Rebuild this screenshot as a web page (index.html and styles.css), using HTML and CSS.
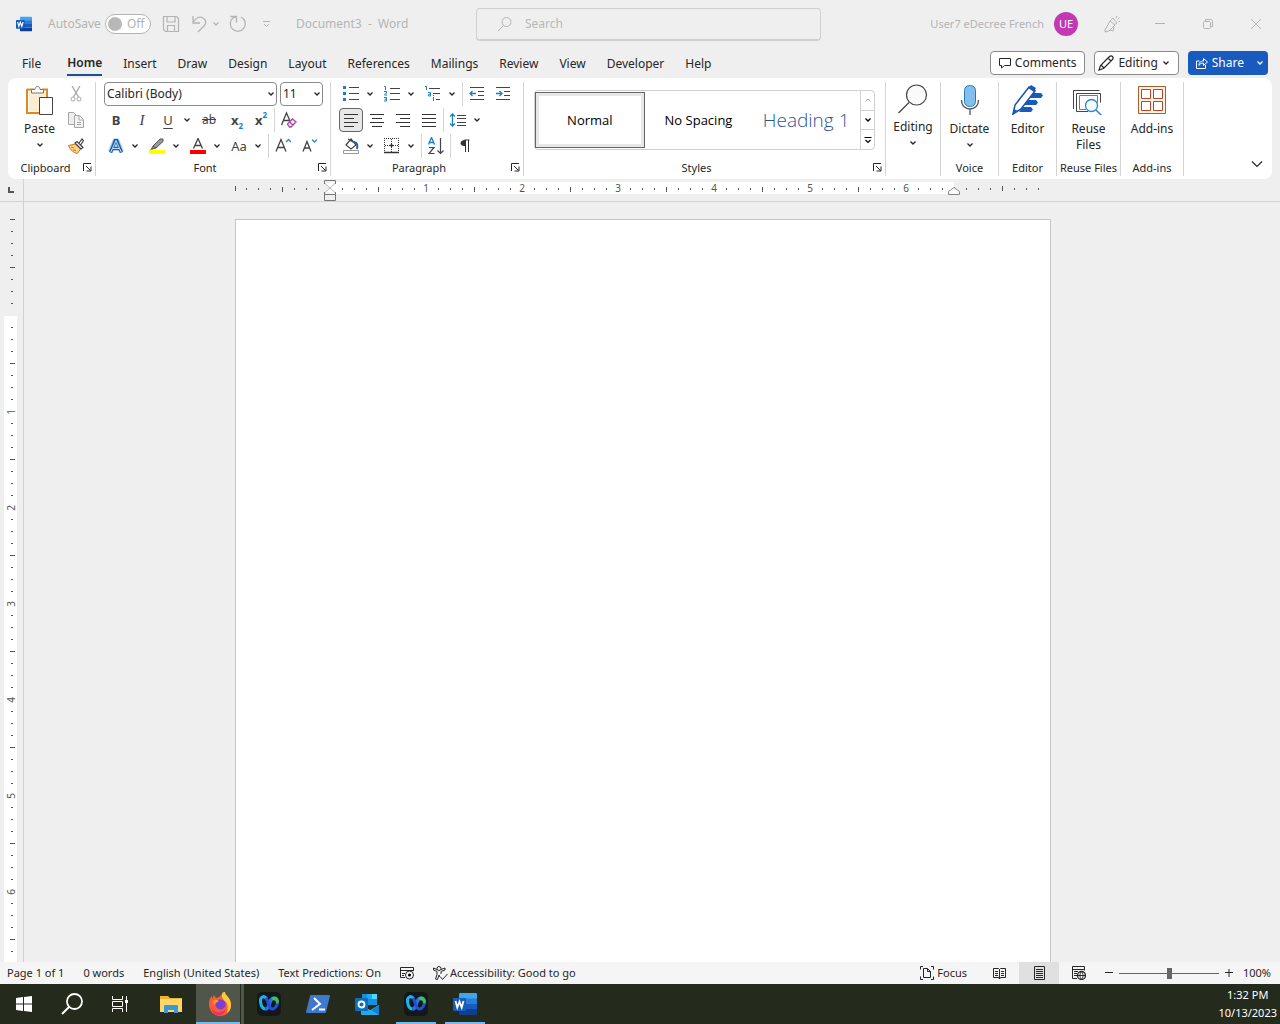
FILE: index.html
```html
<!DOCTYPE html>
<html lang="en">
<head>
  <meta charset="UTF-8">
  <title>Document3 - Word</title>
  <link rel="stylesheet" href="styles.css">
</head>
<body>
  <!-- Shared icons -->
  <svg class="defs" aria-hidden="true">
    <symbol id="chev" viewBox="0 0 8 8"><path d="M1.500 2.500 4 5l2.500-2.500" fill="none" stroke="currentColor" stroke-width="1.300"/></symbol>
    <symbol id="launch" viewBox="0 0 9 9"><path d="M.5 8V.5H8M3 3l4.500 4.500M8 3.500V8H3.500" fill="none" stroke="currentColor"/></symbol>
    <symbol id="webex" viewBox="0 0 24 24">
      <rect width="24" height="24" rx="5" fill="#15181a"/>
      <path d="M9.500 6.500C7 3 3 5 3.500 9.500 4 14 6 17 8.500 17" fill="none" stroke="#14b8ec" stroke-width="3"/>
      <path d="M8.500 17c3 0 3.500-4 4.500-7 1-3 3-4.500 5-3.500" fill="none" stroke="#2f6df0" stroke-width="3.500"/>
      <path d="M9 6c2.500 3 2.500 11 6.500 11 3 0 5-4 5-7.500" fill="none" stroke="#2450d8" stroke-width="3"/>
      <path d="M14.500 6c3-3 7-1 7.500 3l-.5 2.500-2.500-.5c0-2-1-3-3-2.500z" fill="#35c759"/>
    </symbol>
    <symbol id="word" viewBox="0 0 24 22">
      <path d="M7 0h16q1 0 1 1v5H6V1q0-1 1-1z" fill="#41a5ee"/>
      <path d="M6 5.500h18V11H6z" fill="#2b7cd3"/>
      <path d="M6 11h18v5.500H6z" fill="#185abd"/>
      <path d="M6 16.500h18V21q0 1-1 1H7q-1 0-1-1z" fill="#103f91"/>
      <rect y="5" width="13" height="13" rx="1" fill="#185abd"/>
      <path d="m2.500 8 1.800 6.500L6.500 8.500l2.200 6L10.500 8" fill="none" stroke="#fff" stroke-width="1.800"/>
    </symbol>
  </svg>

  <!-- Title bar -->
  <header class="titlebar">
    <svg class="app-icon" width="16" height="16"><use href="#word"/></svg>
    <label class="autosave">AutoSave
      <span class="switch"><input type="checkbox"><span>Off</span></span>
    </label>
    <button class="quick" aria-label="Save"><svg width="18" height="18"><path d="M1.500 1.500h13l2 2v13h-13l-2-2zM5 1.500V7h8V1.500M5.500 16v-5.500h7V16" fill="none" stroke="currentColor" stroke-width="1.200"/></svg></button>
    <button class="quick undo" aria-label="Undo"><svg width="18" height="18"><path d="M2 1v7h7M2 8c3-6 7-7 10-5 4 2.500 3 6 1 8l-6 6" fill="none" stroke="currentColor" stroke-width="1.300"/></svg></button>
    <button class="quick drop" aria-label="Undo list"><svg width="8" height="8"><use href="#chev"/></svg></button>
    <button class="quick redo" aria-label="Repeat"><svg width="18" height="18"><path d="M1.500 1.500h6v6M12 2a7.500 7.500 0 1 1-8 1l3.500-1.500" fill="none" stroke="currentColor" stroke-width="1.300"/></svg></button>
    <button class="quick more" aria-label="Customize"><svg width="9" height="8"><path d="M1 1.500h7M2 4l2.500 2.500L7 4" fill="none" stroke="currentColor"/></svg></button>
    <span class="doc-name">Document3&nbsp; -&nbsp; Word</span>
    <label class="search">
      <svg width="16" height="16"><circle cx="9.500" cy="6" r="4.500" fill="none" stroke="currentColor"/><path d="M6.500 9.500 1 15" stroke="currentColor"/></svg>
      <input type="text" placeholder="Search" aria-label="Search">
    </label>
    <div class="account">
      <span>User7 eDecree French</span>
      <span class="avatar">UE</span>
      <button aria-label="Coming soon"><svg width="18" height="18"><path d="m2 15 5-9 5 4-6 6-4 1zM7 6l3-3 4 5-3 2M13 3l1-2M14.500 4.500l2-2M15.500 6.500H17M7 15l3 1 1-4" fill="none" stroke="currentColor"/></svg></button>
      <button aria-label="Minimize"><svg width="10" height="10"><path d="M0 4.500h10" stroke="currentColor"/></svg></button>
      <button aria-label="Restore"><svg width="10" height="10"><path d="M2.500 2V.5h6l1 1V7.500H8" fill="none" stroke="currentColor"/><rect x=".5" y="2.500" width="7" height="7" rx="1" fill="none" stroke="currentColor"/></svg></button>
      <button aria-label="Close"><svg width="10" height="10"><path d="m0 0 10 10M10 0 0 10" stroke="currentColor"/></svg></button>
    </div>
  </header>

  <!-- Tabs -->
  <nav class="tabs">
    <a href="#" class="file">File</a>
    <a href="#" class="current">Home</a>
    <a href="#">Insert</a>
    <a href="#">Draw</a>
    <a href="#">Design</a>
    <a href="#">Layout</a>
    <a href="#">References</a>
    <a href="#">Mailings</a>
    <a href="#">Review</a>
    <a href="#">View</a>
    <a href="#">Developer</a>
    <a href="#">Help</a>
    <div class="actions">
      <button class="outline"><svg width="12" height="12"><path d="M.5 1.500h11v7h-6l-3 2.500V8.500h-2z" fill="none" stroke="currentColor"/></svg>Comments</button>
      <button class="outline edit-mode"><svg width="16" height="16"><path d="M1 15 2.500 10.500 11 2q2-2 3.500-.5T14 5l-8.500 8.500zM10 3l3 3M3 10l3 3" fill="none" stroke="currentColor" stroke-width="1.200"/></svg>Editing<svg width="8" height="8"><use href="#chev"/></svg></button>
      <button class="share"><svg width="12" height="12"><path d="M3.500 4H.5v7.500h9V8M3 8.500C3 5 5 4 7.500 4V1.500L11.500 5l-4 3.500V6C5.500 6 4 6.500 3 8.500z" fill="none" stroke="currentColor"/></svg>Share<svg class="arrow" width="8" height="8"><use href="#chev"/></svg></button>
    </div>
  </nav>

  <!-- Ribbon -->
  <main class="ribbon">
    <section class="group clipboard">
      <div class="body">
        <button class="big paste">
          <svg width="30" height="32">
            <path d="M2 4.500h7M17 4.500h5V13M2 4v24h12" fill="none" stroke="#e08a1e" stroke-width="2"/>
            <path d="M4 6.500h16V13h-6v13H4z" fill="#fdecd0"/>
            <path d="M6.500 8V4.500H10c0-4 5-4 5 0h3.500V8z" fill="#fff" stroke="#777"/>
            <path d="M14.500 12.500h13v17h-13z" fill="#fff" stroke="#444"/>
          </svg>
          <span>Paste</span>
          <svg class="chev" width="8" height="8"><use href="#chev"/></svg>
        </button>
        <div class="rows">
          <button class="tool dim" aria-label="Cut"><svg width="12" height="16"><path d="m2 0 6.500 11M10 0 3.500 11" stroke="currentColor" stroke-width="1.300"/><circle cx="3" cy="13" r="2" fill="none" stroke="currentColor"/><circle cx="9" cy="13" r="2" fill="none" stroke="currentColor"/></svg></button>
          <button class="tool dim" aria-label="Copy"><svg width="16" height="16"><path d="M6 12.500H.5V.5h5l3 3V5" fill="#eee" stroke="currentColor"/><path d="M6.500 3.500h5l4 4v8h-9zM11 4v4h4M9 10.500h4M9 12.500h4" fill="#f3f3f3" stroke="currentColor"/></svg></button>
          <button class="tool" aria-label="Format Painter"><svg width="16" height="16"><path d="m.5 7.500 7-1.500 5 5-3 4.500C6 15 2 12 .5 7.500z" fill="#fbd08b" stroke="#d67a10"/><path d="m3 9 3 1M5 12l3 .500" stroke="#d67a10"/><path d="m7 5 6 6 2-1.500-6-6zM11 5l3-4 1.500 1.500L13 6.500" fill="#fff" stroke="#444" stroke-width="1.200"/></svg></button>
        </div>
      </div>
      <h2>Clipboard</h2>
      <button class="launcher" aria-label="Clipboard options"><svg width="9" height="9"><use href="#launch"/></svg></button>
    </section>

    <section class="group font">
      <div class="rows">
        <div class="row fields">
          <span class="combo name"><select aria-label="Font"><option>Calibri (Body)</option></select><svg width="8" height="8"><use href="#chev"/></svg></span>
          <span class="combo size"><select aria-label="Font size"><option>11</option></select><svg width="8" height="8"><use href="#chev"/></svg></span>
        </div>
        <div class="row">
          <button class="tool b">B</button>
          <button class="tool i">I</button>
          <button class="tool u">U</button>
          <button class="drop" aria-label="Underline styles"><svg width="8" height="8"><use href="#chev"/></svg></button>
          <button class="tool wide strike">ab</button>
          <button class="tool narrow script">x<sub>2</sub></button>
          <button class="tool narrow script">x<sup>2</sup></button>
          <span class="sep"></span>
          <button class="tool" aria-label="Clear formatting"><svg width="18" height="18"><path d="M1.500 14 6.500 2 10 10M3 9.500h6" fill="none" stroke="#444" stroke-width="1.300"/><path d="m7.500 13 5-5 3.500 3-5 5h-1.500zM9.500 11l3.500 3" fill="#f6e4f8" stroke="#a349a4" stroke-width="1.300"/></svg></button>
        </div>
        <div class="row splits">
          <span><button class="tool" aria-label="Text effects"><svg width="16" height="16"><path d="M2.500 14 7 3h2l4.500 11M5 10.500h6" fill="none" stroke="#9ccbf0" stroke-width="5"/><path d="M2.500 14.500 7.300 2.500h1.400l4.800 12M5 10.500h6" fill="none" stroke="#175ea8" stroke-width="3.200"/><path d="M2.800 14 8 2.500 13.200 14M5 10.500h6" fill="none" stroke="#fff" stroke-width=".8"/></svg></button><button class="drop" aria-label="Effects list"><svg width="8" height="8"><use href="#chev"/></svg></button></span>
          <span><button class="tool" aria-label="Highlight"><svg width="16" height="16"><path d="m4 8 7-7 3 0 0 2.500L7 10zM4 8l-1.500 3L7 10M1 12h3" fill="#999" stroke="#555"/><path d="M0 12h16v4H0z" fill="#ff0"/></svg></button><button class="drop" aria-label="Highlight colors"><svg width="8" height="8"><use href="#chev"/></svg></button></span>
          <span><button class="tool" aria-label="Font color"><svg width="16" height="16"><path d="m3.500 10.500 4.500-10 4.500 10M5 7.500h6" fill="none" stroke="#444" stroke-width="1.300"/><path d="M0 12h16v4H0z" fill="red"/></svg></button><button class="drop" aria-label="Font colors"><svg width="8" height="8"><use href="#chev"/></svg></button></span>
          <span><button class="tool case">Aa</button><button class="drop" aria-label="Case list"><svg width="8" height="8"><use href="#chev"/></svg></button></span>
          <span class="sep"></span>
          <button class="tool" aria-label="Grow font"><svg width="16" height="16"><path d="M1 13.500 6 1.500l5 12M3 9.500h6" fill="none" stroke="#444" stroke-width="1.300"/><path d="m11 4 2.500-2.500L16 4" fill="none" stroke="#2b88c8" stroke-width="1.300"/></svg></button>
          <button class="tool" aria-label="Shrink font"><svg width="16" height="16"><path d="m2 13.500 4-10 4 10M3.500 10h5" fill="none" stroke="#444" stroke-width="1.300"/><path d="M11 1.500 13.500 4 16 1.500" fill="none" stroke="#2b88c8" stroke-width="1.300"/></svg></button>
        </div>
      </div>
      <h2>Font</h2>
      <button class="launcher" aria-label="Font options"><svg width="9" height="9"><use href="#launch"/></svg></button>
    </section>

    <section class="group para">
      <div class="rows">
        <div class="row splits">
          <span><button class="tool" aria-label="Bullets"><svg width="16" height="16"><path d="M0 0h3v3H0zM0 6h3v3H0zM0 12h3v3H0z" fill="#1e7fc0"/><path d="M6 1.500h10M6 7.500h10M6 13.500h10" stroke="#444"/></svg></button><button class="drop" aria-label="Bullet library"><svg width="8" height="8"><use href="#chev"/></svg></button></span>
          <span><button class="tool" aria-label="Numbering"><svg width="16" height="16"><path d="M0 .5h1.500V4M0 5.500h2.500v1.500L.5 9H3M0 11.500h2.500V15H0M.5 13.200h2" fill="none" stroke="#1e7fc0"/><path d="M6 2.500h10M6 7.500h10M6 13.500h10" stroke="#444"/></svg></button><button class="drop" aria-label="Number library"><svg width="8" height="8"><use href="#chev"/></svg></button></span>
          <span><button class="tool" aria-label="Multilevel list"><svg width="16" height="16"><path d="M0 .5h1.500V4M3 6.500h2.500V10H3.500V8.200h2M8.500 11v4M8.500 9v1" fill="none" stroke="#1e7fc0"/><path d="M4 2.500h11M8 7.500h7M11 13.500h4" stroke="#444"/></svg></button><button class="drop" aria-label="List library"><svg width="8" height="8"><use href="#chev"/></svg></button></span>
          <span class="sep"></span>
          <button class="tool" aria-label="Decrease indent"><svg width="16" height="16"><path d="M1 1.500h14M9 5.500h6M9 9.500h6M1 13.500h14" stroke="#444"/><path d="M7 7.500H1M3.500 5 1 7.500 3.500 10" fill="none" stroke="#1e7fc0" stroke-width="1.300"/></svg></button>
          <button class="tool" aria-label="Increase indent"><svg width="16" height="16"><path d="M1 1.500h14M9 5.500h6M9 9.500h6M1 13.500h14" stroke="#444"/><path d="M1 7.500h6M4.500 5 7 7.500 4.500 10" fill="none" stroke="#1e7fc0" stroke-width="1.300"/></svg></button>
        </div>
        <div class="row">
          <button class="tool pressed" aria-label="Align left"><svg width="14" height="14"><path d="M0 1.500h14M0 5.500h10M0 9.500h14M0 13.500h10" stroke="#333"/></svg></button>
          <button class="tool" aria-label="Center"><svg width="14" height="14"><path d="M0 1.500h14M2 5.500h10M0 9.500h14M2 13.500h10" stroke="#333"/></svg></button>
          <button class="tool" aria-label="Align right"><svg width="14" height="14"><path d="M0 1.500h14M4 5.500h10M0 9.500h14M4 13.500h10" stroke="#333"/></svg></button>
          <button class="tool" aria-label="Justify"><svg width="14" height="14"><path d="M0 1.500h14M0 5.500h14M0 9.500h14M0 13.500h14" stroke="#333"/></svg></button>
          <span class="sep"></span>
          <button class="tool" aria-label="Line spacing"><svg width="16" height="14"><path d="M7 2.500h9M7 5.500h9M7 9.500h9M7 12.500h9" stroke="#444"/><path d="M2.500 1v12M0 3.500 2.500 1 5 3.500M0 10.500 2.500 13 5 10.500" fill="none" stroke="#1e7fc0" stroke-width="1.300"/></svg></button>
          <button class="drop" aria-label="Spacing list"><svg width="8" height="8"><use href="#chev"/></svg></button>
        </div>
        <div class="row splits">
          <span><button class="tool" aria-label="Shading"><svg width="16" height="16"><path d="m3 7 5-6 5 6-5 4zM5 1l5 3" fill="#fff" stroke="#444" stroke-width="1.200"/><path d="M11 4c3 0 4 3 3 7" fill="none" stroke="#1e5fa0" stroke-width="2"/><path d="M.5 12.500h15v3H.5z" fill="#fff" stroke="#999"/></svg></button><button class="drop" aria-label="Shading colors"><svg width="8" height="8"><use href="#chev"/></svg></button></span>
          <span><button class="tool" aria-label="Borders"><svg width="16" height="16"><path d="M0 .5h16M.5 0v14M14.500 0v14M7.500 1v13M1 7.500h14" stroke="#333" stroke-dasharray="1 1"/><path d="M6 7.500h3M7.500 6v3M0 14.500h15" stroke="#333" stroke-width="1.300"/></svg></button><button class="drop" aria-label="Border list"><svg width="8" height="8"><use href="#chev"/></svg></button></span>
          <span class="sep"></span>
          <button class="tool" aria-label="Sort"><svg width="16" height="18"><path d="m.5 7.500 3-7 3 7M1.500 5.500h4" fill="none" stroke="#1e7fc0" stroke-width="1.300"/><path d="M1 10.500h5L1 16.500h5.500M12.500 1v15.500M9.500 13.500l3 3 3-3" fill="none" stroke="#444" stroke-width="1.200"/></svg></button>
          <span class="sep"></span>
          <button class="tool" aria-label="Show marks"><svg width="12" height="14"><path d="M5.500 1h5M6.500 1v12M9.500 1v12" stroke="#333"/><path d="M6 1v6C0 7.500 0 1 6 1z" fill="#333"/></svg></button>
        </div>
      </div>
      <h2>Paragraph</h2>
      <button class="launcher" aria-label="Paragraph options"><svg width="9" height="9"><use href="#launch"/></svg></button>
    </section>

    <section class="group styles">
      <div class="gallery">
        <button class="style selected">Normal</button>
        <button class="style">No Spacing</button>
        <button class="style heading">Heading 1</button>
        <div class="scroller">
          <button class="dim" aria-label="Up"><svg width="8" height="8"><path d="M1.500 5.500 4 3l2.500 2.500" fill="none" stroke="currentColor"/></svg></button>
          <button aria-label="Down"><svg width="8" height="8"><use href="#chev"/></svg></button>
          <button aria-label="All styles"><svg width="8" height="8"><path d="M.5 1.500h7M1.500 4 4 6.500 6.500 4" fill="none" stroke="currentColor" stroke-width="1.200"/></svg></button>
        </div>
      </div>
      <h2>Styles</h2>
      <button class="launcher" aria-label="Style options"><svg width="9" height="9"><use href="#launch"/></svg></button>
    </section>

    <section class="group editing">
      <button class="big">
        <svg width="30" height="32"><circle cx="18.500" cy="12" r="10" fill="#fafafa" stroke="#444" stroke-width="1.200"/><path d="M11 19.500.5 30" stroke="#444" stroke-width="1.300"/></svg>
        <span>Editing</span>
        <svg class="chev" width="8" height="8"><use href="#chev"/></svg>
      </button>
    </section>
    <section class="group voice">
      <button class="big low">
        <svg width="20" height="32"><rect x="4.500" y="2.500" width="11" height="21" rx="5" fill="#83beec" stroke="#1e7fc0"/><path d="M1.500 17c0 12 17 12 17 0M10 26v6" fill="none" stroke="#555" stroke-width="1.300"/></svg>
        <span>Dictate</span>
        <svg class="chev" width="8" height="8"><use href="#chev"/></svg>
      </button>
      <h2>Voice</h2>
    </section>
    <section class="group editor">
      <button class="big low">
        <svg width="32" height="32"><path d="M21 10h9l2 2.500-2 2.500H17zM16 17h9l2 2.500-2 2.500H13zM12 24h8l2 2.500-2 2.500H8z" fill="#185abd"/><path d="m2 31 2-9L18 4l6 4L10 26z" fill="#fff" stroke="#1552ae" stroke-width="1.500"/><path d="m17 5 3-3 5 3-2 4zM2 32l1-6 4 2z" fill="#185abd"/></svg>
        <span>Editor</span>
      </button>
      <h2>Editor</h2>
    </section>
    <section class="group reuse">
      <button class="big low">
        <svg width="30" height="34"><path d="M.5 26V7.500h26M3.500 28.500v-18h24v9M3.500 28.500H15" fill="none" stroke="#444"/><path d="M6.500 26.500v-14h18v7M6.500 26.500H13" fill="none" stroke="#777"/><circle cx="18.500" cy="22.500" r="6" fill="#f7fbfe" stroke="#2b88c8" stroke-width="1.300"/><path d="m23 27 6.500 6.500" stroke="#2b88c8" stroke-width="1.500"/></svg>
        <span>Reuse<br>Files</span>
      </button>
      <h2>Reuse Files</h2>
    </section>
    <section class="group addins">
      <button class="big low">
        <svg width="28" height="32"><path d="M.5 3.500h27v27H.5z" fill="#fdf3e4" stroke="#b05a28"/><path d="M3.500 6.500h9v9h-9zM15.500 6.500h9v9h-9zM3.500 18.500h9v9h-9zM15.500 18.500h9v9h-9z" fill="#fff" stroke="#b7472a"/></svg>
        <span>Add-ins</span>
      </button>
      <h2>Add-ins</h2>
    </section>
    <button class="collapse" aria-label="Collapse ribbon"><svg width="12" height="8"><path d="m1 1.500 5 5 5-5" fill="none" stroke="currentColor" stroke-width="1.200"/></svg></button>
  </main>

  <!-- Horizontal ruler: 96px per inch -->
  <div class="hruler">
    <div class="corner"><svg width="6" height="6"><path d="M1 0v5h5" fill="none" stroke="#555" stroke-width="2"/></svg></div>
    <div class="track">
      <svg width="816" height="22">
        <defs>
          <pattern id="hticks" width="96" height="12" patternUnits="userSpaceOnUse">
            <path d="M12 5h1v2h-1zM24 5h1v2h-1zM36 5h1v2h-1zM48 4h1v5h-1zM60 5h1v2h-1zM72 5h1v2h-1zM84 5h1v2h-1z" fill="#555"/>
          </pattern>
        </defs>
        <path d="M95 3h624v12H95z" fill="#fff"/>
        <g transform="translate(-1 4)"><rect x="1" width="806" height="12" fill="url(#hticks)"/></g>
        <path d="M0 7h1v5H0zM767 7h1v5h-1z" fill="#555"/>
        <g class="nums"><text x="191" y="13">1</text><text x="287" y="13">2</text><text x="383" y="13">3</text><text x="479" y="13">4</text><text x="575" y="13">5</text><text x="671" y="13">6</text></g>
        <path d="M90 4.500 95 9l5-4.500M90 13.500 95 9l5 4.500" fill="#fff" stroke="#bbb"/>
        <path d="M89.500 5V1.500h11V5M89.500 13v8.500h11V13M89.500 15.500h11" fill="none" stroke="#777"/>
        <path d="M713.500 15.500v-3l5.500-4 5.500 4v3z" fill="#fff" stroke="#888"/>
      </svg>
    </div>
  </div>

  <!-- Document area -->
  <div class="workspace">
    <div class="vruler">
      <svg width="23" height="100%">
        <defs>
          <pattern id="vticks" width="24" height="96" patternUnits="userSpaceOnUse">
            <path d="M11 12h2v1h-2zM11 24h2v1h-2zM11 36h2v1h-2zM10 48h5v1h-5zM11 60h2v1h-2zM11 72h2v1h-2zM11 84h2v1h-2z" fill="#555"/>
          </pattern>
        </defs>
        <rect x="4" y="114" width="13" height="100%" fill="#fff"/>
        <g transform="translate(0 17)"><rect width="24" height="100%" fill="url(#vticks)"/></g>
        <path d="M10 17h5v1h-5z" fill="#555"/>
        <g class="nums"><text transform="translate(15 210) rotate(-90)">1</text><text transform="translate(15 306) rotate(-90)">2</text><text transform="translate(15 402) rotate(-90)">3</text><text transform="translate(15 498) rotate(-90)">4</text><text transform="translate(15 594) rotate(-90)">5</text><text transform="translate(15 690) rotate(-90)">6</text></g>
      </svg>
    </div>
    <div class="canvas"><div class="page"></div></div>
  </div>

  <!-- Status bar -->
  <div class="statusbar">
    <span>Page 1 of 1</span>
    <span>0 words</span>
    <span>English (United States)</span>
    <span>Text Predictions: On</span>
    <button aria-label="Macros"><svg width="14" height="14"><path d="M5 11.500H.5V1.500h13V5M.5 4.500h13M2 7.500h3M2 9.500h2" fill="none" stroke="currentColor"/><circle cx="9.500" cy="9" r="4" fill="#f5f5f5" stroke="currentColor"/><circle cx="9.500" cy="9" r="1.500"/></svg></button>
    <button class="access"><svg width="15" height="14"><circle cx="6" cy="2.500" r="2" fill="none" stroke="currentColor"/><path d="M4 3.500.5 2v2L4 5.500v3L2.500 13l2 .5L6 9l1 2M8 3.500 12 2v2L8 5.500V8M7.500 11l2 2.500L14.500 8" fill="none" stroke="currentColor"/></svg>Accessibility: Good to go</button>
    <div class="views">
      <button class="focus"><svg width="14" height="14"><path d="M3 .5H.5v3M.5 10.500v3H3M11 .5h2.500v3M13.500 10.500v3H11M3.500 2.500h4l3 3v6h-7zM7.500 2.500v3h3" fill="none" stroke="currentColor"/></svg>Focus</button>
      <button class="view" aria-label="Read mode"><svg width="13" height="13"><path d="M.5 1.500h5l1 1 1-1h5v9h-5l-1 1.500-1-1.500h-5zM6.500 2v10M2 4.500h3M2 6.500h3M2 8.500h3M8 4.500h3M8 6.500h3M8 8.500h3" fill="none" stroke="currentColor"/></svg></button>
      <button class="view active" aria-label="Print layout"><svg width="11" height="14"><path d="M.5.5h10v13H.5zM2 3.500h7M2 5.500h7M2 7.500h7M2 9.500h7M2 11.500h7" fill="none" stroke="currentColor"/></svg></button>
      <button class="view" aria-label="Web layout"><svg width="14" height="14"><path d="M5 12.500H.5V.5h12v4M.5 3.500h12M2 5.500h4M2 7.500h3M2 9.500h3" fill="none" stroke="currentColor"/><circle cx="9.500" cy="9.500" r="4" fill="#f5f5f5" stroke="currentColor" stroke-width="1.300"/><path d="M5.500 9.500h8M9.500 5.500c-2 2-2 6 0 8M9.500 5.500c2 2 2 6 0 8" fill="none" stroke="currentColor"/></svg></button>
      <button class="zoom-btn" aria-label="Zoom out"><svg width="8" height="8"><path d="M0 3.500h8" stroke="currentColor"/></svg></button>
      <input class="zoom" type="range" min="0" max="200" value="100" aria-label="Zoom">
      <button class="zoom-btn" aria-label="Zoom in"><svg width="8" height="8"><path d="M0 3.500h8M4 0v8" stroke="currentColor"/></svg></button>
      <span class="percent">100%</span>
    </div>
  </div>

  <!-- Taskbar -->
  <footer class="taskbar">
    <button aria-label="Start"><svg width="16" height="16"><path d="m0 2 7-1v6.500H0zM8 1l8-1v7.500H8zM0 8.500h7V15l-7-1zM8 8.500h8V16l-8-1z" fill="#fff"/></svg></button>
    <button aria-label="Search"><svg width="22" height="22"><circle cx="13.500" cy="8.500" r="7.500" fill="none" stroke="#fff" stroke-width="1.800"/><path d="m8 14-7 7" stroke="#fff" stroke-width="2"/></svg></button>
    <button aria-label="Task view"><svg width="16" height="16"><path d="M.5 0v3.500h10V0M.5 16v-3.500h10V16M.5 5.500h10v5H.5zM14.500 0v16" fill="none" stroke="#fff"/><path d="M13 4h3v3h-3z" fill="#fff"/></svg></button>
    <button class="first" aria-label="File Explorer"><svg width="22" height="18"><path d="M0 1h8l2 2h12v14H0z" fill="#f0b12c"/><path d="M0 4h22v13H0z" fill="#ffd766"/><path d="M4 18V11q0-1 1-1h12q1 0 1 1v7h-4v-3H8v3z" fill="#3a97dc"/></svg></button>
    <button class="open focused" aria-label="Firefox"><svg width="24" height="24">
      <path d="M1 12c0-4 1-6 3-8v3l2-4 2 3c3-1 4-1 6-4 0-1 1-2 3-2 0 4 6 5 6 13 0 7-5 11-11 11S1 19 1 12z" fill="#ff5a36"/>
      <path d="M14 2c1-2 2-2 3-2 0 4 6 5 6 13 0 3-1 6-4 8 1-5 1-8-1-11-2-2-5-4-4-8z" fill="#ffc83d"/>
      <path d="M3 15c2 6 10 7 15 2-2 6-6 7-9 6s-5-3-6-8z" fill="#f02f63"/>
      <circle cx="12.500" cy="12.500" r="5" fill="#7a3fd0"/><path d="M5 9c2-2 4-1 6 0-2 2-4 1-4 4-2-1-2-2-2-4z" fill="#ff9a2e"/>
    </svg></button>
    <button aria-label="Webex"><svg width="24" height="24"><use href="#webex"/></svg></button>
    <button aria-label="PowerShell"><svg width="24" height="18"><path d="M5 0h18q1 0 1 1l-4 16q0 1-1 1H1q-1 0-1-1L4 1q0-1 1-1z" fill="#3f78cf"/><path d="m8 3 6 6-8 6M13 14.500h6" fill="none" stroke="#fff" stroke-width="2"/></svg></button>
    <button aria-label="Outlook"><svg width="24" height="22"><path d="M7 1h15v11H7z" fill="#1490df"/><path d="M12 1h5v5h-5z" fill="#28a8ea"/><path d="M17 1h5v5h-5z" fill="#50d9ff"/><path d="M7 6h5v6H7z" fill="#0364b8"/><path d="m6 12 9 5 9-5v9q0 1-1 1H7q-1 0-1-1z" fill="#28a8ea"/><path d="m24 12-8 5 8 5z" fill="#1480cf"/><rect y="5" width="13" height="13" rx="1" fill="#0a6ebd"/><circle cx="6.500" cy="11.500" r="3" fill="none" stroke="#fff" stroke-width="1.800"/></svg></button>
    <button class="open" aria-label="Webex meeting"><svg width="24" height="24"><use href="#webex"/></svg></button>
    <button class="open" aria-label="Word"><svg width="24" height="22"><use href="#word"/></svg></button>
    <div class="clock"><span>1:32 PM</span><span>10/13/2023</span></div>
  </footer>
</body>
</html>
```
FILE: styles.css
```css
*{box-sizing:border-box;}
html,body{height:100%;margin:0;}
body{display:flex;flex-direction:column;overflow:hidden;background:#efefef;color:#262626;font:12px/16px "Noto Sans","Open Sans",sans-serif;}
button,input,select{font:inherit;color:inherit;}
button{display:flex;align-items:center;justify-content:center;padding:0;border:0;background:none;}
a{color:inherit;text-decoration:none;}
svg{flex:none;display:block;}
h2{margin:0;font-size:11px;line-height:16px;font-weight:400;}
.defs{position:absolute;width:0;height:0;}

/* --- Title bar --- */
.titlebar{position:relative;display:flex;align-items:center;height:48px;padding-left:16px;color:#b4b4b4;}
.autosave{display:flex;align-items:center;gap:4px;margin-left:16px;}
.switch{display:flex;align-items:center;width:46px;height:20px;padding-left:2px;border:1px solid #b4b4b4;border-radius:10px;background:#fff;}
.switch input{appearance:none;width:14px;height:14px;margin:0 5px 0 0;border-radius:50%;background:#b8b8b8;}
.quick{width:18px;margin-left:11px;}
.quick.drop{width:10px;margin-left:2px;}
.quick.redo{margin-left:8px;}
.quick.more{margin-left:11px;}
.doc-name{margin-left:20px;}
.search{position:absolute;left:476px;right:459px;top:8px;display:flex;align-items:center;gap:12px;height:33px;padding-left:20px;border:1px solid #d0d0d0;border-bottom-width:2px;border-radius:4px;}
.search input{flex:1;border:0;background:none;outline:0;padding:0;}
.search input::placeholder{color:#b8b8b8;}
.account{display:flex;align-items:center;margin-left:auto;font-size:11px;}
.account button{width:48px;height:48px;}
.avatar{width:24px;margin:0 10px;border-radius:50%;background:#c239b3;color:#fff;line-height:24px;text-align:center;}

/* --- Tabs --- */
.tabs{display:flex;align-items:center;gap:21px;height:30px;padding:0 12px 0 22px;}
.tabs a{padding-top:2px;line-height:24px;}
.tabs .file{margin-right:5px;}
.tabs .current{border-bottom:2px solid #1f4e8c;line-height:22px;font-weight:600;}
.actions{display:flex;gap:9px;margin-left:auto;}
.actions button{height:24px;gap:4px;padding:0 8px;border-radius:4px;}
.actions .outline{border:1px solid #8a8a8a;background:#fff;}
.actions .edit-mode{padding:0 8px 0 3px;}
.actions .share{padding:0 4px 0 8px;background:#185abd;color:#fff;}
.share .arrow{margin-left:8px;}

/* --- Ribbon --- */
.ribbon{display:flex;height:101px;margin:0 8px;padding:4px 0 3px;border-radius:8px;background:#fff;}
.group{position:relative;display:flex;flex-direction:column;align-items:center;border-right:1px solid #d4d4d4;}
.group h2{margin-top:auto;white-space:nowrap;}
.launcher{position:absolute;right:3px;bottom:4px;}
.clipboard{width:88px;}
.clipboard h2{padding-right:12px;}
.clipboard .body{display:flex;padding-right:6px;}
.font{width:235px;}
.font h2{padding-right:16px;}
.para{width:193px;}
.para h2{padding-right:16px;}
.styles{width:362px;}
.styles h2{padding-right:16px;}
.editing{width:55px;}
.voice,.editor{width:58px;}
.reuse{width:64px;}
.addins{width:63px;}
.rows{display:flex;flex-direction:column;gap:2px;}
.row{display:flex;align-items:center;height:24px;}
.font .rows,.para .rows{width:100%;padding-left:7px;}
.splits>span:not(.sep){display:flex;margin-right:3px;}
.tool{width:26px;height:24px;color:#444;}
.tool.wide{width:32px;}
.tool.narrow{width:24px;}
.tool.pressed{width:24px;margin:0 1px;border:1px solid #666;border-radius:4px;background:#e8e8e8;}
.drop{width:12px;height:24px;}
.sep{width:1px;height:24px;margin:0 1px;background:#d4d4d4;}
.dim{color:#a6a6a6;}
.tool.b{font-weight:700;font-size:13px;}
.tool.i{font-family:"Liberation Serif",serif;font-style:italic;font-size:15px;}
.tool.u{font-size:13px;text-decoration:underline;text-underline-offset:3px;}
.strike{text-decoration:line-through;}
.script{font-size:13px;font-weight:700;}
.script sub,.script sup{color:#1e7fc0;font-size:8px;line-height:8px;}
.script sub{align-self:flex-end;margin-bottom:2px;}
.script sup{align-self:flex-start;margin-top:3px;}
.case{font-size:13px;}
.fields{gap:3px;padding-left:1px;}
.combo{position:relative;display:flex;}
.combo select{width:100%;height:24px;padding:0 2px;border:1px solid #8a8a8a;border-radius:4px;background:#fff;appearance:none;}
.combo svg{position:absolute;right:2px;top:8px;pointer-events:none;}
.combo.name{width:173px;}
.combo.size{width:43px;}
.big{flex-direction:column;justify-content:flex-start;margin-top:1px;}
.big span{margin-top:4px;}
.big .chev{margin-top:4px;}
.big.low span{margin-top:6px;}
.big.low svg:first-child{height:32px;}
.paste{width:54px;padding:2px 0 0 8px;}

/* --- Style gallery --- */
.gallery{display:flex;width:341px;height:60px;margin-top:8px;border:1px solid #d0d0d0;border-radius:4px;color:#000;font-family:"Open Sans",sans-serif;font-size:13px;}
.style{flex:1;}
.style.selected{margin:1px 0;border:1px solid #666;box-shadow:inset 0 0 0 3px #e8e8e8;}
.style.heading{color:#2f5496;font-size:19px;font-weight:300;white-space:nowrap;}
.scroller{display:flex;flex-direction:column;width:14px;border-left:1px solid #d0d0d0;}
.scroller button{flex:1;}
.scroller button+button{border-top:1px solid #d0d0d0;}
.collapse{align-self:flex-end;margin:0 9px 8px auto;}

/* --- Rulers and page --- */
.hruler{display:flex;height:23px;border-bottom:1px solid #d2d2d2;}
.corner{width:24px;padding:8px 0 0 8px;border-right:1px solid #d2d2d2;}
.track,.canvas{flex:1;display:flex;justify-content:center;padding-right:18px;}
.nums{fill:#555;font-size:10px;text-anchor:middle;}
.workspace{flex:1;display:flex;min-height:0;overflow:hidden;}
.vruler{width:24px;border-right:1px solid #d2d2d2;}
.page{width:816px;margin-top:17px;border:1px solid #c6c6c6;border-bottom:0;background:#fff;}

/* --- Status bar --- */
.statusbar{display:flex;align-items:center;gap:19px;height:22px;padding-left:7px;background:#f5f5f5;font-size:11px;}
.access{gap:2px;}
.views{display:flex;align-items:center;height:100%;margin-left:auto;padding-right:9px;}
.focus{gap:3px;margin-right:12px;}
.view{width:40px;height:100%;}
.view.active{background:#e0e0e0;}
.zoom-btn{width:20px;height:100%;}
.zoom{appearance:none;width:100px;height:12px;margin:0;background:linear-gradient(#666,#666) center/100% 1px no-repeat;}
.zoom::-webkit-slider-thumb{appearance:none;width:5px;height:11px;background:#666;}
.percent{width:32px;text-align:right;}

/* --- Taskbar --- */
.taskbar{display:flex;height:40px;background:#242b1c;color:#fff;}
.taskbar button{width:48px;height:40px;margin-right:1px;}
.taskbar button:nth-child(-n+3){margin-right:0;}
.taskbar .first{margin-left:3px;}
.taskbar .open{background:linear-gradient(#76b9ed,#76b9ed) center bottom/40px 2px no-repeat;}
.taskbar .focused{background:linear-gradient(#76b9ed,#76b9ed) left bottom/44px 2px no-repeat,linear-gradient(90deg,#51564a 44px,#242b1c 44px,#242b1c 45px,#51564a 45px);}
.clock{display:flex;flex-direction:column;align-items:center;justify-content:center;margin-left:auto;padding-right:3px;font-size:11px;line-height:18px;}
```
